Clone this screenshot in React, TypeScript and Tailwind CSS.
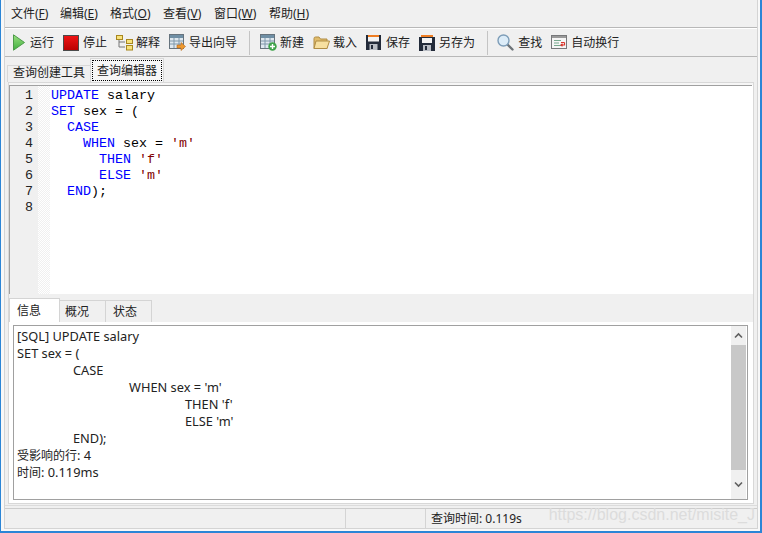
const cjk = "font-['Noto_Sans','Noto_Sans_CJK_SC',sans-serif]";

const menus = [
  ["文件(", "F", "w-[49px]"],
  ["编辑(", "E", "w-[50px]"],
  ["格式(", "O", "w-[53px]"],
  ["查看(", "V", "w-[51px]"],
  ["窗口(", "W", "w-[55px]"],
  ["帮助(", "H", "w-[50px]"],
];

const RunIcon = () => (
  <svg width="12" height="17" viewBox="0 0 12 17">
    <defs>
      <linearGradient id="run" x1="0" y1="0" x2="0" y2="1">
        <stop offset="0" stopColor="#9be07f" />
        <stop offset="1" stopColor="#3fae3f" />
      </linearGradient>
    </defs>
    <path d="M0.5 0.8 L11.5 8.5 L0.5 16.2 Z" fill="url(#run)" stroke="#4d9a4a" />
  </svg>
);

const StopIcon = () => (
  <svg width="16" height="16" viewBox="0 0 16 16">
    <defs>
      <linearGradient id="stop" x1="0" y1="0" x2="0" y2="1">
        <stop offset="0" stopColor="#f01414" />
        <stop offset="1" stopColor="#b80000" />
      </linearGradient>
    </defs>
    <rect x="0.5" y="0.5" width="15" height="15" fill="url(#stop)" stroke="#4a4a4a" />
  </svg>
);

const ExplainIcon = () => (
  <svg width="17" height="16" viewBox="0 0 17 16">
    <path d="M3 4 V12 H9 M3 7 H9" fill="none" stroke="#777" />
    <rect x="0.5" y="0.5" width="6" height="4" fill="#f8e27c" stroke="#a8871f" />
    <rect x="10.5" y="4.5" width="6" height="4" fill="#f8e27c" stroke="#a8871f" />
    <rect x="10.5" y="10.5" width="6" height="4.5" fill="#f8e27c" stroke="#a8871f" />
  </svg>
);

const TableIcon = ({ badge }: { badge: "arrow" | "plus" }) => (
  <svg width="17" height="17" viewBox="0 0 17 17">
    <rect x="0.5" y="0.5" width="14" height="14" fill="#dfe8ef" stroke="#66737d" />
    <rect x="1" y="1" width="13" height="3" fill="#6f8fa5" />
    <path d="M1 7 H14 M1 10 H14 M5 4 V14 M10 4 V14" stroke="#7f98aa" />
    {badge === "arrow" ? (
      <path d="M8 11 H12 V8.5 L16.5 12.5 L12 16.5 V14 H8 Z" fill="#ee9a30" stroke="#b5651a" strokeWidth="0.6" />
    ) : (
      <>
        <circle cx="12.5" cy="12.5" r="4.2" fill="#3ea34a" />
        <path d="M12.5 10 V15 M10 12.5 H15" stroke="#fff" strokeWidth="1.4" />
      </>
    )}
  </svg>
);

const FolderIcon = () => (
  <svg width="17" height="14" viewBox="0 0 17 14">
    <path d="M1 2.5 Q1 1 2.5 1 H6 L7.5 3 H14 V12.5 H1 Z" fill="#e0bb6a" stroke="#b08d45" />
    <path d="M1 12.5 L3 5 H16.5 L14 12.5 Z" fill="#f7e0a0" stroke="#b08d45" />
  </svg>
);

const SaveIcon = () => (
  <svg width="15" height="15" viewBox="0 0 15 15">
    <path d="M0 0 H15 V15 H0 Z" fill="#232b3a" />
    <rect x="2" y="0" width="11" height="2" fill="#ef7d22" />
    <rect x="2" y="2" width="11" height="4.5" fill="#f3f3f3" />
    <rect x="3.5" y="9" width="8" height="6" fill="#b9bdc4" />
    <rect x="5" y="10" width="2" height="4" fill="#232b3a" />
  </svg>
);

const SaveAsIcon = () => (
  <svg width="16" height="16" viewBox="0 0 16 16">
    <path d="M0 2 H2 V0 H14 V2 H16 V16 H0 Z" fill="#232b3a" />
    <rect x="2" y="0" width="12" height="2" fill="#ef7d22" />
    <rect x="3" y="3" width="10" height="5" fill="#f3f3f3" />
    <rect x="4" y="10" width="8" height="6" fill="#b9bdc4" />
    <rect x="6" y="11" width="2" height="4" fill="#232b3a" />
  </svg>
);

const FindIcon = () => (
  <svg width="17" height="17" viewBox="0 0 17 17">
    <path d="M10.5 10.5 L15.5 15.5" stroke="#6d7378" strokeWidth="2.4" strokeLinecap="round" />
    <circle cx="6.5" cy="6.5" r="5.5" fill="#dcecf8" stroke="#7d9db8" strokeWidth="1.4" />
  </svg>
);

const WrapIcon = () => (
  <svg width="16" height="15" viewBox="0 0 16 15">
    <rect x="0.5" y="0.5" width="15" height="13" fill="#f6f6f6" stroke="#77787a" />
    <rect x="1" y="1" width="14" height="2" fill="#9a9a9a" />
    <path d="M3 5.5 H10 M3 8 H8 M3 10.5 H10" stroke="#79a98f" />
    <path d="M10 7.5 H13.5 M13.5 7.5 V10 H10.5 M11.5 8.8 L10 10 L11.5 11.2" fill="none" stroke="#d9352c" strokeWidth="1.2" />
  </svg>
);

function Tool({ icon, label, gap }: { icon: React.ReactNode; label: string; gap: string }) {
  return (
    <div className={`flex items-center ${gap}`}>
      {icon}
      <span className="text-[12px] leading-none text-[#222]">{label}</span>
    </div>
  );
}

const kw = "text-[#0000ff]";
const str = "text-[#7f0000]";

const codeLines: React.ReactNode[] = [
  <><span className={kw}>UPDATE</span> salary</>,
  <><span className={kw}>SET</span> sex = (</>,
  <>  <span className={kw}>CASE</span></>,
  <>    <span className={kw}>WHEN</span> sex = <span className={str}>'m'</span></>,
  <>      <span className={kw}>THEN</span> <span className={str}>'f'</span></>,
  <>      <span className={kw}>ELSE</span> <span className={str}>'m'</span></>,
  <>  <span className={kw}>END</span>);</>,
  <></>,
];

const zh = "text-[12px]";

const infoLines: [string, React.ReactNode][] = [
  ["pl-0", "[SQL] UPDATE salary"],
  ["pl-0", "SET sex = ("],
  ["pl-[56px]", "CASE"],
  ["pl-[112px]", "WHEN sex = 'm'"],
  ["pl-[168px]", "THEN 'f'"],
  ["pl-[168px]", "ELSE 'm'"],
  ["pl-[56px]", "END);"],
  ["pl-0", <><span className={zh}>受影响的行</span>: 4</>],
  ["pl-0", <><span className={zh}>时间</span>: 0.119ms</>],
];

export default function App() {
  return (
    <div className={`relative flex h-[533px] w-[762px] overflow-hidden border-r-2 border-b-2 border-l border-[#2b85d6] bg-[#f8f8f8] pr-[2px] pl-[3px] ${cjk}`}>
      <div className="flex h-[529px] w-[754px] shrink-0 flex-col border-x border-b border-x-[#d4d4d4] border-b-[#d4d4d4] bg-[#f0f0f0]">
        {/* menu */}
        <div className="flex h-[27px] shrink-0 items-center pt-[1px] pl-[6px]">
          {menus.map(([m, k, w]) => (
            <span key={k} className={`${w} text-[12px] leading-none text-[#222]`}>
              {m}
              <span className="underline">{k}</span>)
            </span>
          ))}
        </div>
        <div className="h-[2px] shrink-0 border-t border-b border-t-[#b8b8b8] border-b-white" />

        {/* toolbar */}
        <div className="flex h-[27px] shrink-0 items-center pl-[8px]">
          <div className="flex items-center gap-[9px]">
            <Tool icon={<RunIcon />} label="运行" gap="gap-[5px]" />
            <Tool icon={<StopIcon />} label="停止" gap="gap-[4px]" />
            <Tool icon={<ExplainIcon />} label="解释" gap="gap-[3px]" />
            <Tool icon={<TableIcon badge="arrow" />} label="导出向导" gap="gap-[3px]" />
          </div>
          <div className="mr-[10px] ml-[12px] h-[24px] w-[1px] bg-[#c4c4c4]" />
          <div className="flex items-center gap-[9px]">
            <Tool icon={<TableIcon badge="plus" />} label="新建" gap="gap-[3px]" />
            <Tool icon={<FolderIcon />} label="载入" gap="gap-[3px]" />
            <Tool icon={<SaveIcon />} label="保存" gap="gap-[5px]" />
            <Tool icon={<SaveAsIcon />} label="另存为" gap="gap-[4px]" />
          </div>
          <div className="mr-[9px] ml-[12px] h-[24px] w-[1px] bg-[#c4c4c4]" />
          <div className="flex items-center gap-[9px]">
            <Tool icon={<FindIcon />} label="查找" gap="gap-[4px]" />
            <Tool icon={<WrapIcon />} label="自动换行" gap="gap-[4px]" />
          </div>
        </div>
        <div className="h-[1px] shrink-0 bg-[#b8b8b8]" />

        {/* query tabs */}
        <div className="flex h-[25px] shrink-0 items-end pl-[2px]">
          <div className="flex h-[17px] items-center border-t border-l border-[#d8d8d8] px-[5px] pb-[2px] text-[12px] leading-none text-[#222]">查询创建工具</div>
          <div className="flex h-[24px] items-center border-x border-t border-[#d8d8d8] bg-[#f6f6f6] px-[1px] text-[12px] leading-none text-[#222]">
            <span className="flex h-[21px] items-center border border-dotted border-black px-[4px] pt-[1px]">查询编辑器</span>
          </div>
        </div>

        {/* editor + messages */}
        <div className="mr-[3px] ml-[3px] flex min-h-0 flex-1 flex-col border-x border-t border-b border-[#d8d8d8] bg-white">
          <div className="h-[2px] shrink-0 bg-[#f6f6f6]" />
          <div className="mr-[1px] flex h-[209px] shrink-0 border-t border-l border-t-[#a0a0a0] border-l-[#a0a0a0] bg-white font-['Liberation_Mono',monospace] text-[13.33px] leading-[16px]">
            <div className="flex w-[28px] shrink-0 flex-col bg-[#f0f0f0] pt-[2px] pr-[5px] text-right text-[#222]">
              {codeLines.map((_, i) => (
                <div key={i} className="h-[16px]">{i + 1}</div>
              ))}
            </div>
            <div className="w-[12px] shrink-0 bg-[conic-gradient(#f0f0f0_25%,#ffffff_0_50%,#f0f0f0_0_75%,#ffffff_0)] bg-[length:2px_2px]" />
            <div className="flex-1 pt-[2px] pl-[1px] whitespace-pre text-black">
              {codeLines.map((l, i) => (
                <div key={i} className="h-[16px]">{l}</div>
              ))}
            </div>
          </div>

          {/* info tabs */}
          <div className="flex h-[28px] shrink-0 items-end bg-[#f0f0f0] pt-[3px]">
            <div className="flex h-[24px] w-[51px] items-center border-x border-t border-[#d4d4d4] bg-white pl-[7px] text-[12px] leading-none text-[#222]">信息</div>
            <div className="flex h-[22px] w-[46px] items-center border-t border-r border-[#d4d4d4] pt-[1px] pl-[5px] text-[12px] leading-none text-[#222]">概况</div>
            <div className="flex h-[22px] w-[46px] items-center border-t border-r border-[#d4d4d4] pt-[1px] pl-[7px] text-[12px] leading-none text-[#222]">状态</div>
          </div>

          <div className="flex min-h-0 flex-1 flex-col px-[4px] pt-[3px]">
            <div className="mr-[1px] flex h-[175px] border border-[#a0a0a0] bg-white">
              <div className="flex-1 pt-[2px] pl-[3px] text-[12.8px] leading-[17px] text-[#222]">
                {infoLines.map(([indent, t], i) => (
                  <div key={i} className={`h-[17px] ${indent}`}>{t}</div>
                ))}
              </div>
              <div className="mr-[1px] flex w-[15px] shrink-0 flex-col bg-[#f0f0f0]">
                <div className="flex h-[19px] items-center justify-center">
                  <svg width="9" height="7" viewBox="0 0 9 7"><path d="M1 5.5 L4.5 2 L8 5.5" fill="none" stroke="#606060" strokeWidth="1.6" /></svg>
                </div>
                <div className="h-[125px] bg-[#c8c8c8]" />
                <div className="flex flex-1 items-center justify-center">
                  <svg width="9" height="7" viewBox="0 0 9 7"><path d="M1 1.5 L4.5 5 L8 1.5" fill="none" stroke="#606060" strokeWidth="1.6" /></svg>
                </div>
              </div>
            </div>
          </div>
        </div>
        <div className="mt-[1px] mb-[2px] h-[1px] shrink-0 bg-[#dcdcdc]" />

        {/* status bar */}
        <div className="flex h-[20px] shrink-0 items-center border-t border-[#cccccc] text-[12px] leading-none text-[#222]">
          <div className="h-full w-[341px] border-r border-[#d4d4d4]" />
          <div className="h-full w-[80px] border-r border-[#d4d4d4]" />
          <span className="pl-[5px]">查询时间: 0.119s</span>
        </div>
      </div>

      <span className="absolute right-[5px] bottom-[8px] font-['Liberation_Sans',sans-serif] text-[16px] leading-none text-[#dcdcdc]">https://blog.csdn.net/misite_J</span>
    </div>
  );
}
